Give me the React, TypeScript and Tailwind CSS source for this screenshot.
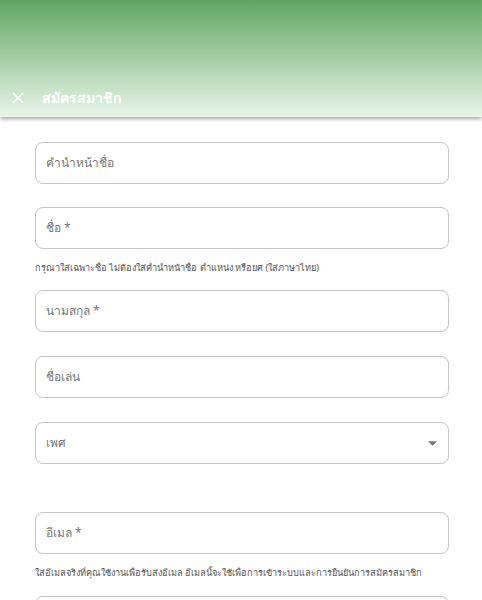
import React from "react";

function Field({ label, select }: { label: string; select?: boolean }) {
  return (
    <div className="h-[42px] rounded-[8px] border border-[#c4c4c4] flex items-center pl-[10px] pr-[10px] justify-between">
      <span className="text-[12px] text-[#777777]">{label}</span>
      {select && (
        <svg width="9" height="5" viewBox="0 0 10 5" className="mr-[1px]">
          <path d="M0 0 L10 0 L5 5 Z" fill="#777" />
        </svg>
      )}
    </div>
  );
}

export default function App() {
  return (
    <div className="w-[482px] h-[600px] overflow-hidden bg-white" style={{ fontFamily: '"Noto Sans", "Open Sans", sans-serif' }}>
      <div className="h-[117px] bg-gradient-to-b from-[#5fa662] to-[#e9f5ea] flex items-end pb-[9px] shadow-[0_2px_4px_rgba(0,0,0,0.35)] relative z-10">
        <div className="flex items-center">
          <svg width="12" height="12" viewBox="0 0 12 12" className="ml-[12px]">
            <path d="M1 1 L11 11 M11 1 L1 11" stroke="white" strokeWidth="1.6" />
          </svg>
          <span className="ml-[18px] text-white text-[14px] font-bold">สมัครสมาชิก</span>
        </div>
      </div>
      <div className="ml-[35px] w-[414px] pt-[25px] flex flex-col">
        <Field label="คำนำหน้าชื่อ" />
        <div className="h-[23px]" />
        <Field label="ชื่อ *" />
        <p className="mt-[12px] text-[9.2px] text-[#555] leading-[14px]">กรุณาใส่เฉพาะชื่อ ไม่ต้องใส่คำนำหน้าชื่อ ตำแหน่ง หรือยศ (ใส่ภาษาไทย)</p>
        <div className="h-[15px]" />
        <Field label="นามสกุล *" />
        <div className="h-[24px]" />
        <Field label="ชื่อเล่น" />
        <div className="h-[24px]" />
        <Field label="เพศ" select />
        <div className="h-[48px]" />
        <Field label="อีเมล *" />
        <p className="mt-[12px] text-[9.2px] text-[#555] leading-[14px]">ใส่อีเมลจริงที่คุณใช้งานเพื่อรับส่งอีเมล อีเมลนี้จะใช้เพื่อการเข้าระบบและการยืนยันการสมัครสมาชิก</p>
        <div className="h-[16px]" />
        <Field label="" />
      </div>
    </div>
  );
}
